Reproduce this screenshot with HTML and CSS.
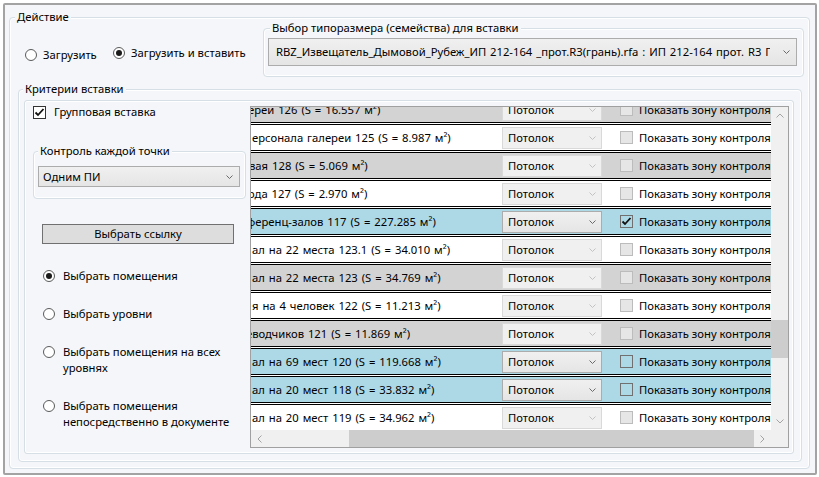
FILE: index.html
```html
<!DOCTYPE html>
<html lang="ru">
<head>
<meta charset="utf-8">
<title>Вставка</title>
<link rel="stylesheet" href="styles.css">
</head>
<body>
<div class="window">
  <div class="group action">
    <div class="group-title">Действие</div>
    <div class="top-row">
      <div class="load-opts">
        <div class="radio r-load"><span class="rb"></span>Загрузить</div>
        <div class="radio r-load2"><span class="rb on"></span>Загрузить и вставить</div>
      </div>
      <div class="group family">
        <div class="group-title">Выбор типоразмера (семейства) для вставки</div>
        <div class="combo wide">
          <span class="combo-text">RBZ_Извещатель_Дымовой_Рубеж_ИП 212-164 _прот.R3(грань).rfa : ИП 212-164 прот. R3 ПИ</span>
          <svg class="chev" width="7" height="4" viewBox="0 0 7 4"><path d="M0.5 0.5L3.5 3.5L6.5 0.5"/></svg>
        </div>
      </div>
    </div>
    <div class="group criteria">
      <div class="group-title">Критерии вставки</div>
      <div class="panel">
        <div class="left">
          <div class="check-row"><span class="cbx main"><svg width="11" height="11" viewBox="0 0 11 11"><path d="M1.5 5.5L4 8L9.5 2"/></svg></span>Групповая вставка</div>
          <div class="group ctl-group">
            <div class="group-title">Контроль каждой точки</div>
            <div class="combo small">
              <span class="combo-text">Одним ПИ</span>
              <svg class="chev" width="7" height="4" viewBox="0 0 7 4"><path d="M0.5 0.5L3.5 3.5L6.5 0.5"/></svg>
            </div>
          </div>
          <div class="btn">Выбрать ссылку</div>
          <div class="opts">
            <div class="opt"><span class="rb on"></span><span class="opt-text">Выбрать помещения</span></div>
            <div class="opt"><span class="rb"></span><span class="opt-text">Выбрать уровни</span></div>
            <div class="opt"><span class="rb"></span><span class="opt-text">Выбрать помещения на всех уровнях</span></div>
            <div class="opt"><span class="rb"></span><span class="opt-text">Выбрать помещения непосредственно в документе</span></div>
          </div>
        </div>
        <div class="grid">
          <div class="body">
            <div class="rows">
              <div class="row gray"><div class="name"><span class="s4">ереи 126 (S = 16.557 м²)</span></div><div class="combo gcombo dis"><span class="combo-text">Потолок</span><svg class="chev" width="7" height="4" viewBox="0 0 7 4"><path d="M0.5 0.5L3.5 3.5L6.5 0.5"/></svg></div><div class="gchk"><span class="cbx dis"></span>Показать зону контроля</div></div>
              <div class="row white"><div class="name"><span>ерсонала галереи 125 (S = 8.987 м²)</span></div><div class="combo gcombo dis"><span class="combo-text">Потолок</span><svg class="chev" width="7" height="4" viewBox="0 0 7 4"><path d="M0.5 0.5L3.5 3.5L6.5 0.5"/></svg></div><div class="gchk"><span class="cbx dis"></span>Показать зону контроля</div></div>
              <div class="row gray"><div class="name"><span class="s3">вая 128 (S = 5.069 м²)</span></div><div class="combo gcombo dis"><span class="combo-text">Потолок</span><svg class="chev" width="7" height="4" viewBox="0 0 7 4"><path d="M0.5 0.5L3.5 3.5L6.5 0.5"/></svg></div><div class="gchk"><span class="cbx dis"></span>Показать зону контроля</div></div>
              <div class="row white"><div class="name"><span class="s4">ода 127 (S = 2.970 м²)</span></div><div class="combo gcombo dis"><span class="combo-text">Потолок</span><svg class="chev" width="7" height="4" viewBox="0 0 7 4"><path d="M0.5 0.5L3.5 3.5L6.5 0.5"/></svg></div><div class="gchk"><span class="cbx dis"></span>Показать зону контроля</div></div>
              <div class="row blue"><div class="name"><span class="s5">ференц-залов 117 (S = 227.285 м²)</span></div><div class="combo gcombo"><span class="combo-text">Потолок</span><svg class="chev" width="7" height="4" viewBox="0 0 7 4"><path d="M0.5 0.5L3.5 3.5L6.5 0.5"/></svg></div><div class="gchk"><span class="cbx en"><svg width="11" height="11" viewBox="0 0 11 11"><path d="M1.5 5.5L4 8L9.5 2"/></svg></span>Показать зону контроля</div></div>
              <div class="row white"><div class="name"><span>ал на 22 места 123.1 (S = 34.010 м²)</span></div><div class="combo gcombo dis"><span class="combo-text">Потолок</span><svg class="chev" width="7" height="4" viewBox="0 0 7 4"><path d="M0.5 0.5L3.5 3.5L6.5 0.5"/></svg></div><div class="gchk"><span class="cbx dis"></span>Показать зону контроля</div></div>
              <div class="row gray"><div class="name"><span>ал на 22 места 123 (S = 34.769 м²)</span></div><div class="combo gcombo dis"><span class="combo-text">Потолок</span><svg class="chev" width="7" height="4" viewBox="0 0 7 4"><path d="M0.5 0.5L3.5 3.5L6.5 0.5"/></svg></div><div class="gchk"><span class="cbx dis"></span>Показать зону контроля</div></div>
              <div class="row white"><div class="name"><span>я на 4 человек 122 (S = 11.213 м²)</span></div><div class="combo gcombo dis"><span class="combo-text">Потолок</span><svg class="chev" width="7" height="4" viewBox="0 0 7 4"><path d="M0.5 0.5L3.5 3.5L6.5 0.5"/></svg></div><div class="gchk"><span class="cbx dis"></span>Показать зону контроля</div></div>
              <div class="row gray"><div class="name"><span class="s6">еводчиков 121 (S = 11.869 м²)</span></div><div class="combo gcombo dis"><span class="combo-text">Потолок</span><svg class="chev" width="7" height="4" viewBox="0 0 7 4"><path d="M0.5 0.5L3.5 3.5L6.5 0.5"/></svg></div><div class="gchk"><span class="cbx dis"></span>Показать зону контроля</div></div>
              <div class="row blue"><div class="name"><span>ал на 69 мест 120 (S = 119.668 м²)</span></div><div class="combo gcombo"><span class="combo-text">Потолок</span><svg class="chev" width="7" height="4" viewBox="0 0 7 4"><path d="M0.5 0.5L3.5 3.5L6.5 0.5"/></svg></div><div class="gchk"><span class="cbx en"></span>Показать зону контроля</div></div>
              <div class="row blue"><div class="name"><span>ал на 20 мест 118 (S = 33.832 м²)</span></div><div class="combo gcombo"><span class="combo-text">Потолок</span><svg class="chev" width="7" height="4" viewBox="0 0 7 4"><path d="M0.5 0.5L3.5 3.5L6.5 0.5"/></svg></div><div class="gchk"><span class="cbx en"></span>Показать зону контроля</div></div>
              <div class="row white"><div class="name"><span>ал на 20 мест 119 (S = 34.962 м²)</span></div><div class="combo gcombo dis"><span class="combo-text">Потолок</span><svg class="chev" width="7" height="4" viewBox="0 0 7 4"><path d="M0.5 0.5L3.5 3.5L6.5 0.5"/></svg></div><div class="gchk"><span class="cbx dis"></span>Показать зону контроля</div></div>
            </div>
          </div>
          <div class="vscroll">
            <div class="sb-btn"><svg width="8" height="5" viewBox="0 0 8 5"><path d="M0.5 4.5L4 1L7.5 4.5"/></svg></div>
            <div class="v-gap"></div>
            <div class="thumb v-thumb"></div>
            <div class="v-rest"></div>
            <div class="sb-btn"><svg width="8" height="5" viewBox="0 0 8 5"><path d="M0.5 0.5L4 4L7.5 0.5"/></svg></div>
          </div>
          <div class="hscroll">
            <div class="sb-btn h"><svg width="5" height="8" viewBox="0 0 5 8"><path d="M4.5 0.5L1 4L4.5 7.5"/></svg></div>
            <div class="h-gap"></div>
            <div class="thumb h-thumb"></div>
            <div class="sb-btn h"><svg width="5" height="8" viewBox="0 0 5 8"><path d="M0.5 0.5L4 4L0.5 7.5"/></svg></div>
          </div>
          <div class="corner"></div>
        </div>
      </div>
    </div>
  </div>
</div>
</body>
</html>
```
FILE: styles.css
```css
body {
  margin: 0;
  background: #fff;
  font-family: "Noto Sans", "Open Sans", sans-serif;
  font-size: 11.25px;
  line-height: 16px;
  color: #000;
}

.window {
  margin: 3px 0 0 3px;
  width: 814px;
  height: 472px;
  box-sizing: border-box;
  border: 2px solid #a3a3a3;
  border-radius: 2px;
  background: #f4f6f9;
  padding: 12px 0 0 4px;
}

.group {
  position: relative;
  box-sizing: border-box;
  border: 1px solid #d5dfe5;
  border-radius: 4px;
  box-shadow: inset 0 0 0 1px #fff;
}

.group-title {
  position: absolute;
  top: -9px;
  padding: 0 2px;
  background: #f4f6f9;
  line-height: 16px;
  white-space: nowrap;
}

.action {
  width: 801px;
  height: 452px;
  padding: 10px 0 0 8px;
}
.action > .group-title { left: 5px; }

.top-row {
  display: flex;
  height: 49px;
}

.load-opts {
  width: 245px;
  box-sizing: border-box;
  padding-left: 7px;
  display: flex;
  align-items: flex-start;
}

.radio {
  display: flex;
  align-items: center;
  white-space: nowrap;
}
.r-load { width: 88px; margin-top: 19px; }
.r-load2 { margin-top: 17px; }

.rb {
  flex: none;
  width: 12px;
  height: 12px;
  box-sizing: border-box;
  border: 1px solid #5a5a5a;
  border-radius: 50%;
  background: #fff;
  margin-right: 6px;
  display: flex;
  align-items: center;
  justify-content: center;
}
.rb.on::after {
  content: "";
  width: 6px;
  height: 6px;
  border-radius: 50%;
  background: #1a1a1a;
}

.family {
  width: 541px;
  height: 49px;
  padding: 9px 0 0 4px;
}
.family > .group-title { left: 6px; }

.combo {
  box-sizing: border-box;
  display: flex;
  align-items: center;
  border: 1px solid #acacac;
  background: linear-gradient(#f0f0f0, #e5e5e5);
}
.combo-text {
  overflow: hidden;
  white-space: nowrap;
}
.chev { flex: none; margin-left: auto; }
.chev path { fill: none; stroke: #6a6a6a; stroke-width: 1; }

.combo.wide {
  width: 529px;
  height: 28px;
  padding-left: 7px;
}
.combo.wide .combo-text { width: 494px; word-spacing: 1px; }
.combo.wide .chev { margin-right: 6px; }

.criteria {
  width: 784px;
  height: 373px;
  margin-top: 12px;
  padding: 10px 7px 7px 5px;
}
.criteria > .group-title { left: 4px; }

.panel {
  height: 354px;
  box-sizing: border-box;
  border: 1px solid #d5dfe5;
  border-radius: 3px;
  box-shadow: inset 0 0 0 1px #fff;
  display: flex;
}

.left {
  flex: none;
  width: 225px;
}

.check-row {
  display: flex;
  align-items: center;
  margin: 3px 0 0 8px;
  white-space: nowrap;
}

.cbx {
  flex: none;
  width: 13px;
  height: 13px;
  box-sizing: border-box;
  border: 1px solid #333;
  background: #fff;
  margin-right: 8px;
  display: flex;
  align-items: center;
  justify-content: center;
}
.cbx svg path { fill: none; stroke: #111; stroke-width: 1.8; }

.ctl-group {
  margin: 31px 0 0 8px;
  width: 213px;
  height: 48px;
  padding: 14px 0 0 4px;
}
.ctl-group > .group-title { left: 4px; }

.combo.small {
  width: 202px;
  height: 21px;
  padding-left: 4px;
}
.combo.small .chev { margin-right: 6px; }

.btn {
  margin: 25px 0 0 17px;
  width: 192px;
  height: 20px;
  box-sizing: border-box;
  border: 1px solid #707070;
  background: #dddddd;
  text-align: center;
  line-height: 18px;
}

.opts {
  display: flex;
  flex-direction: column;
  gap: 22px;
  margin: 24px 0 0 18px;
}
.opt {
  display: flex;
  align-items: flex-start;
}
.opt .rb { margin: 2px 8px 0 0; }
.opt-text { width: 182px; }

/* data grid */
.grid {
  flex: none;
  margin-top: 5px;
  width: 539px;
  height: 342px;
  box-sizing: border-box;
  border: 1px solid #a0a0a0;
  display: grid;
  grid-template-columns: 520px 17px;
  grid-template-rows: 323px 17px;
  background: #fff;
}

.body {
  overflow: hidden;
  background: #fff;
}
.rows { margin-top: -11px; }

.row {
  display: flex;
  width: 600px;
  height: 27px;
  box-sizing: border-box;
  border-top: 1px solid #000;
  border-bottom: 1px solid #000;
  margin-bottom: 1px;
}
.row.gray { background: #d3d3d3; }
.row.white { background: #fff; }
.row.blue { background: #add8e6; }

.name {
  flex: none;
  width: 248px;
  padding-left: 1px;
  overflow: hidden;
  white-space: nowrap;
  line-height: 25px;
  word-spacing: 1px;
}
.name span { display: inline-block; }
.name .s3 { margin-left: -3px; }
.name .s4 { margin-left: -4px; }
.name .s5 { margin-left: -5px; }
.name .s6 { margin-left: -6px; }

.gcombo {
  flex: none;
  margin: 2px 0 0 2px;
  width: 100px;
  height: 22px;
  padding-left: 5px;
}
.gcombo .chev { margin-right: 5px; }
.gcombo.dis {
  background: #f0f0f0;
  border-color: #d9d9d9;
}
.gcombo.dis .chev path { stroke: #c2c2c2; }

.gchk {
  display: flex;
  align-items: center;
  margin-left: 18px;
  white-space: nowrap;
}
.gchk .cbx { margin-right: 6px; }
.cbx.dis { background: #e6e6e6; border-color: #bcbcbc; }
.cbx.en { background: transparent; border-color: #707070; }

.vscroll {
  background: #f0f0f0;
  display: flex;
  flex-direction: column;
}
.hscroll {
  background: #f0f0f0;
  display: flex;
}
.corner { background: #f0f0f0; }

.sb-btn {
  flex: none;
  height: 17px;
  display: flex;
  align-items: center;
  justify-content: center;
}
.sb-btn.h { width: 17px; height: auto; }
.sb-btn path { fill: none; stroke: #a3a3a3; stroke-width: 1; }

.thumb { background: #cdcdcd; }
.v-gap { height: 196px; flex: none; }
.v-thumb { height: 38px; flex: none; }
.v-rest { flex: 1; }
.h-gap { width: 81px; flex: none; }
.h-thumb { flex: 1; }
```
